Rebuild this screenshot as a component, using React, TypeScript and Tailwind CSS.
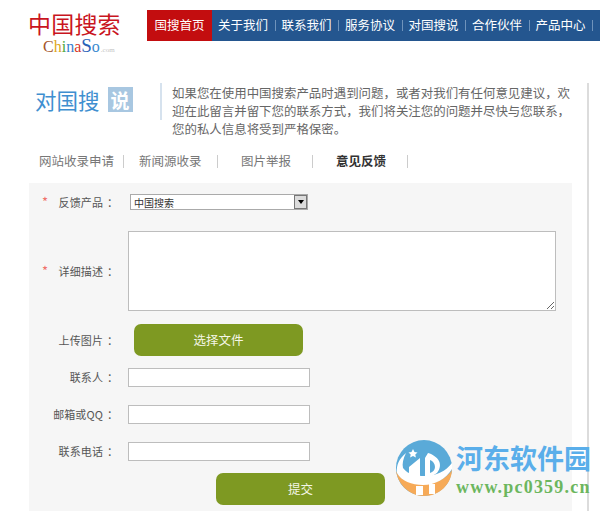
import React from "react";

const navItems = ["关于我们", "联系我们", "服务协议", "对国搜说", "合作伙伴", "产品中心"];

function Logo() {
  return (
    <div className="w-[147px] shrink-0 pl-[28px]">
      <div className="text-[23px] leading-[26px] tracking-[0.2px] text-[#c9151e] font-['Noto_Sans_CJK_SC']">
        中国搜索
      </div>
      <div className="pl-[15px] flex items-baseline font-['Liberation_Serif'] text-[16px] leading-[20px]">
        <span className="text-[#a5562a]">C</span>
        <span className="text-[#e0a81c]">h</span>
        <span className="text-[#4aa63c]">i</span>
        <span className="text-[#3a7fd0]">n</span>
        <span className="text-[#d8352a]">a</span>
        <span className="text-[#2a62b8] text-[19px]">S</span>
        <span className="text-[#3a8ad0]">o</span>
        <span className="text-[7px] text-[#c4c4c4] ml-[1px]">.com</span>
      </div>
    </div>
  );
}

function Nav() {
  return (
    <div className="flex-1 h-[31px] bg-[#24568f] flex items-center text-white text-[12.5px] overflow-hidden">
      <div className="w-[65px] h-full bg-[#c30d0f] flex items-center justify-center shrink-0">国搜首页</div>
      {navItems.map((item) => (
        <div key={item} className="flex items-center shrink-0">
          <span className="pl-[6px] pr-[6.5px] whitespace-nowrap">{item}</span>
          <span className="w-px h-[11px] bg-[#6f93bb]" />
        </div>
      ))}
    </div>
  );
}

function Intro() {
  return (
    <div className="flex h-[37px]">
      <div className="w-[131px] pl-[6px] shrink-0 flex items-start pt-[4px]">
        <span className="text-[21.5px] leading-[25px] text-[#3f8fd0]">对国搜</span>
        <span className="ml-[8px] w-[25px] h-[25px] bg-[#a8c7e1] text-white text-[19px] leading-[25px] text-center font-bold">说</span>
      </div>
      <div className="border-l-2 border-[#d6e2ee] pl-[10px] text-[12.45px] leading-[18px] text-[#666] h-[37px] whitespace-nowrap">
        <p className="pt-px">如果您在使用中国搜索产品时遇到问题，或者对我们有任何意见建议，欢</p>
        <p>迎在此留言并留下您的联系方式，我们将关注您的问题并尽快与您联系，</p>
        <p>您的私人信息将受到严格保密。</p>
      </div>
    </div>
  );
}

function Tabs() {
  return (
    <div className="flex items-center h-[14px] mt-[34px] text-[12.5px] leading-[14px] text-[#777]">
      <span className="w-[94px] pl-[10px] whitespace-nowrap">网站收录申请</span>
      <span className="w-px h-[13px] bg-[#ccc]" />
      <span className="w-[93px] pl-[15px] whitespace-nowrap">新闻源收录</span>
      <span className="w-px h-[13px] bg-[#ccc]" />
      <span className="w-[94px] pl-[23px] whitespace-nowrap">图片举报</span>
      <span className="w-px h-[13px] bg-[#ccc]" />
      <span className="w-[94px] pl-[23px] whitespace-nowrap font-bold text-[#333]">意见反馈</span>
      <span className="w-px h-[13px] bg-[#ccc]" />
    </div>
  );
}

function Label({ text, required }: { text: string; required?: boolean }) {
  return (
    <div className="w-[99px] shrink-0 flex items-center text-[11px] text-[#555] whitespace-nowrap">
      <span className="w-[28px] pl-[13px] text-[#f0706a] text-[13px] shrink-0">{required ? "*" : ""}</span>
      <span className="w-[46px] flex justify-end tracking-[0.1px]">{text}</span>
      <span className="w-[25px] pl-[4px]">：</span>
    </div>
  );
}

function TextInput() {
  return <input type="text" className="w-[182px] h-[19px] bg-white border border-[#bdbdbd] outline-none" />;
}

function GreenButton({ text }: { text: string }) {
  return (
    <div className="w-[169px] h-[32px] rounded-[7px] bg-[#7e9922] text-[#f4f6e6] text-[12.5px] flex items-center justify-center">
      {text}
    </div>
  );
}

function Form() {
  return (
    <div className="w-[543px] h-[328px] bg-[#f6f6f6] mt-[15px] pt-[11px]">
      <div className="flex items-center h-[16px]">
        <Label text="反馈产品" required />
        <div className="ml-[2px] w-[178px] h-[16px] bg-white border border-[#aaa] flex items-center justify-between pl-[3px] text-[10px] text-[#333]">
          <span>中国搜索</span>
          <span className="w-[13px] h-[14px] bg-[#dcdcdc] border border-[#777] flex items-center justify-center">
            <span className="w-0 h-0 border-x-[3px] border-x-transparent border-t-[4px] border-t-black" />
          </span>
        </div>
      </div>
      <div className="flex items-center mt-[21px]">
        <Label text="详细描述" required />
        <textarea className="block w-[428px] h-[80px] bg-white border border-[#bdbdbd] outline-none" />
      </div>
      <div className="flex items-center mt-[13px]">
        <Label text="上传图片" />
        <div className="ml-[6px]">
          <GreenButton text="选择文件" />
        </div>
      </div>
      <div className="flex items-center mt-[12px]">
        <Label text="联系人" />
        <TextInput />
      </div>
      <div className="flex items-center mt-[18px]">
        <Label text="邮箱或QQ" />
        <TextInput />
      </div>
      <div className="flex items-center mt-[18px]">
        <Label text="联系电话" />
        <TextInput />
      </div>
      <div className="mt-[12px] ml-[187px]">
        <GreenButton text="提交" />
      </div>
    </div>
  );
}

function Watermark() {
  return (
    <div className="absolute left-[395px] top-[440px] flex">
      <svg width="58" height="56" viewBox="0 0 58 56">
        <circle cx="29" cy="28" r="28" fill="#5aaad8" />
        <path d="M1 31c3 8 14 13 27 13 12 0 23-5 29-14-1 15-13 26-28 26C15 56 3 45 1 31z" fill="#f6aa58" />
        <path d="M2 33c-1-8 2-14 9-20-3 6-4 11-3 15 5 7 14 8 22 8 11 0 21-5 27-13v6c-6 10-17 16-29 16-11 0-22-4-26-12z" fill="#fff" />
        <path d="M14 36l0-9 11-9v20zM30 38V18l3-5c10 3 16 11 9 20-3 2-7 4-12 5z" fill="#fff" />
        <path d="M35 20c3 1 5 4 5 7s-2 5-5 6z" fill="#5aaad8" />
        <path d="M21 46h7v9h-7zM34 44h6v10h-6z" fill="#fff" />
        <path d="M18 9l1.500 3 3 .5-2.200 2 .6 3-2.900-1.500-2.900 1.500.6-3-2.200-2 3-.5z" fill="#fff" />
      </svg>
      <div className="ml-[3px] pt-[2px]">
        <div className="text-[27px] leading-[32px] font-bold text-[#5aaeea] whitespace-nowrap font-['Noto_Sans_CJK_SC']">河东软件园</div>
        <div className="text-[18px] leading-[18px] mt-[4px] font-bold tracking-[1.2px] text-[#6cb65e] whitespace-nowrap font-['Liberation_Serif']">www.pc0359.cn</div>
      </div>
    </div>
  );
}

export default function App() {
  return (
    <div className="relative w-[600px] h-[511px] overflow-hidden bg-white font-['Noto_Sans_CJK_SC','Noto_Sans',sans-serif]">
      <div className="flex pt-[10px] h-[83px]">
        <Logo />
        <Nav />
      </div>
      <div className="ml-[29px] w-[560px] h-[428px] border-r-2 border-[#dcdcdc]">
        <Intro />
        <Tabs />
        <Form />
      </div>
      <Watermark />
    </div>
  );
}
